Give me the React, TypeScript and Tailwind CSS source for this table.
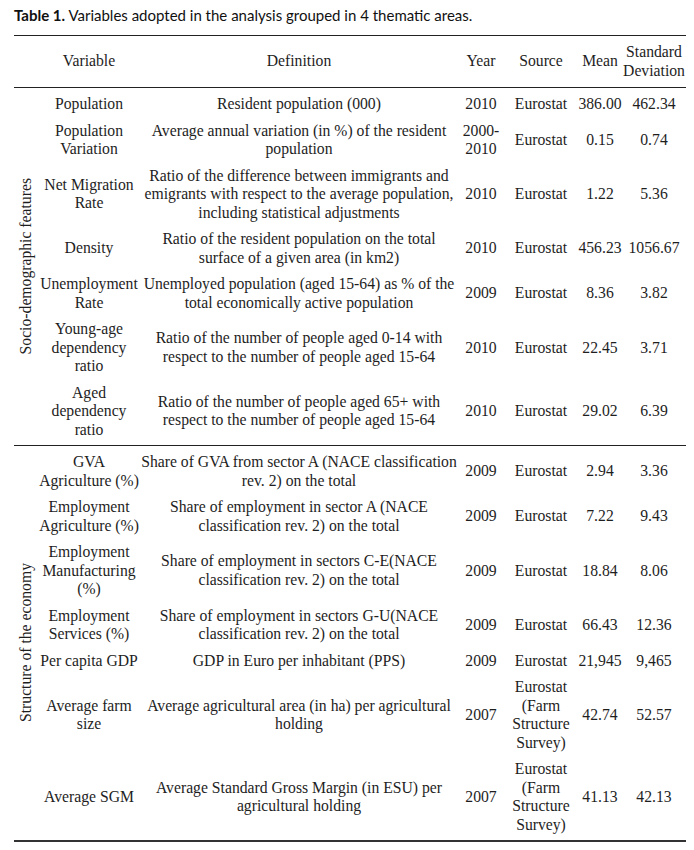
import React from "react";

type Row = {
  v: string[];
  d: string[];
  y: string[];
  s: string[];
  m: string;
  sd: string;
};

const E = ["Eurostat"];
const FSS = ["Eurostat", "(Farm", "Structure", "Survey)"];

const group1: Row[] = [
  { v: ["Population"], d: ["Resident population (000)"], y: ["2010"], s: E, m: "386.00", sd: "462.34" },
  { v: ["Population", "Variation"], d: ["Average annual variation (in %) of the resident", "population"], y: ["2000-", "2010"], s: E, m: "0.15", sd: "0.74" },
  { v: ["Net Migration", "Rate"], d: ["Ratio of the difference between immigrants and", "emigrants with respect to the average population,", "including statistical adjustments"], y: ["2010"], s: E, m: "1.22", sd: "5.36" },
  { v: ["Density"], d: ["Ratio of the resident population on the total", "surface of a given area (in km2)"], y: ["2010"], s: E, m: "456.23", sd: "1056.67" },
  { v: ["Unemployment", "Rate"], d: ["Unemployed population (aged 15-64) as % of the", "total economically active population"], y: ["2009"], s: E, m: "8.36", sd: "3.82" },
  { v: ["Young-age", "dependency", "ratio"], d: ["Ratio of the number of people aged 0-14 with", "respect to the number of people aged 15-64"], y: ["2010"], s: E, m: "22.45", sd: "3.71" },
  { v: ["Aged", "dependency", "ratio"], d: ["Ratio of the number of people aged 65+ with", "respect to the number of people aged 15-64"], y: ["2010"], s: E, m: "29.02", sd: "6.39" },
];

const group2: Row[] = [
  { v: ["GVA", "Agriculture (%)"], d: ["Share of GVA from sector A (NACE classification", "rev. 2) on the total"], y: ["2009"], s: E, m: "2.94", sd: "3.36" },
  { v: ["Employment", "Agriculture (%)"], d: ["Share of employment in sector A (NACE", "classification rev. 2) on the total"], y: ["2009"], s: E, m: "7.22", sd: "9.43" },
  { v: ["Employment", "Manufacturing", "(%)"], d: ["Share of employment in sectors C-E(NACE", "classification rev. 2) on the total"], y: ["2009"], s: E, m: "18.84", sd: "8.06" },
  { v: ["Employment", "Services (%)"], d: ["Share of employment in sectors G-U(NACE", "classification rev. 2) on the total"], y: ["2009"], s: E, m: "66.43", sd: "12.36" },
  { v: ["Per capita GDP"], d: ["GDP in Euro per inhabitant (PPS)"], y: ["2009"], s: E, m: "21,945", sd: "9,465" },
  { v: ["Average farm", "size"], d: ["Average agricultural area (in ha) per agricultural", "holding"], y: ["2007"], s: FSS, m: "42.74", sd: "52.57" },
  { v: ["Average SGM"], d: ["Average Standard Gross Margin (in ESU) per", "agricultural holding"], y: ["2007"], s: FSS, m: "41.13", sd: "42.13" },
];

function Lines({ items }: { items: string[] }) {
  return (
    <>
      {items.map((t, i) => (
        <div key={i} className="whitespace-nowrap">
          {t}
        </div>
      ))}
    </>
  );
}

function Group({ rows, label, last }: { rows: Row[]; label: string; last?: boolean }) {
  return (
    <tbody className={last ? "border-b-2 border-[#333]" : "border-b border-[#222]"}>
      {rows.map((r, i) => {
        const pad =
          i === 0 ? "pt-[7px] pb-[4px]" : i === rows.length - 1 ? "pt-[4px] pb-[6px]" : "py-[4px]";
        const cell = `${pad} px-0 text-center align-middle`;
        return (
          <tr key={i}>
            {i === 0 && (
              <td rowSpan={rows.length} className="p-0 align-middle text-center">
                <div className="flex justify-center">
                  <span className="[writing-mode:vertical-rl] rotate-180 whitespace-nowrap">{label}</span>
                </div>
              </td>
            )}
            <td className={cell}><Lines items={r.v} /></td>
            <td className={cell}><Lines items={r.d} /></td>
            <td className={cell}><Lines items={r.y} /></td>
            <td className={cell}><Lines items={r.s} /></td>
            <td className={cell}><Lines items={[r.m]} /></td>
            <td className={cell}><Lines items={[r.sd]} /></td>
          </tr>
        );
      })}
    </tbody>
  );
}

export default function App() {
  return (
    <div className="w-[694px] h-[850px] bg-white overflow-hidden pt-[6px] text-[#1e1e1e]">
      <p className="pl-[14px] text-[15px] leading-[18px] font-['Lato',sans-serif] text-[#111]">
        <span className="font-bold">Table 1.</span> Variables adopted in the analysis grouped in 4 thematic areas.
      </p>
      <table className="ml-[14px] mt-[11px] w-[672px] table-fixed border-collapse font-['Liberation_Serif',serif] text-[15.7px] leading-[18.5px]">
        <colgroup>
          <col className="w-[24px]" />
          <col className="w-[102px]" />
          <col className="w-[318px]" />
          <col className="w-[46px]" />
          <col className="w-[74px]" />
          <col className="w-[44px]" />
          <col className="w-[64px]" />
        </colgroup>
        <thead className="border-t border-b border-[#222]">
          <tr>
            <th className="p-0 font-normal"></th>
            <th className="py-[7px] px-0 font-normal text-center align-middle">Variable</th>
            <th className="py-[7px] px-0 font-normal text-center align-middle">Definition</th>
            <th className="py-[7px] px-0 font-normal text-center align-middle">Year</th>
            <th className="py-[7px] px-0 font-normal text-center align-middle">Source</th>
            <th className="py-[7px] px-0 font-normal text-center align-middle">Mean</th>
            <th className="py-[7px] px-0 font-normal text-center align-middle whitespace-nowrap">
              <div>Standard</div>
              <div>Deviation</div>
            </th>
          </tr>
        </thead>
        <Group rows={group1} label="Socio-demographic features" />
        <Group rows={group2} label="Structure of the economy" last />
      </table>
    </div>
  );
}
